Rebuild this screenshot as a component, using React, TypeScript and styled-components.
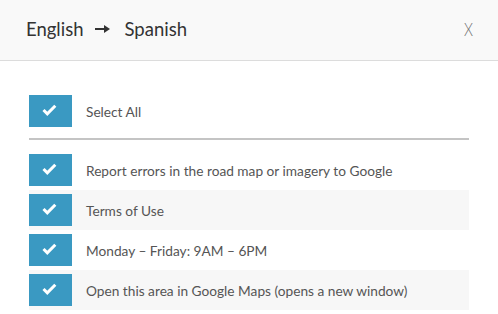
import React, { useState } from 'react';
import styled, { createGlobalStyle } from 'styled-components';

const GlobalStyle = createGlobalStyle`
  html, body {
    margin: 0;
    padding: 0;
    background: #ffffff;
  }
  body {
    font-family: Lato, "Open Sans", sans-serif;
  }
`;

const Dialog = styled.div`
  width: 498px;
  height: 314px;
  background-color: #ffffff;
  overflow: hidden;
`;

const Header = styled.div`
  display: flex;
  align-items: center;
  justify-content: space-between;
  height: 60px;
  padding: 0 24px 0 26px;
  background-color: #f9f9f9;
  border-bottom: 1px solid #dcdcdc;
`;

const Title = styled.div`
  display: flex;
  align-items: center;
  font-size: 18.5px;
  color: #333333;
  padding-bottom: 2px;

  svg {
    margin: 0 15px 0 11px;
  }
`;

const CloseButton = styled.button`
  border: none;
  background: none;
  padding: 0 0 2px 0;
  font-family: Lato, sans-serif;
  font-size: 18px;
  font-weight: 300;
  color: #707070;
  cursor: pointer;
  transform: scaleX(0.8);
`;

const Body = styled.div`
  padding: 30px 29px 0 29px;
`;

const Row = styled.label<{ striped?: boolean }>`
  display: flex;
  align-items: center;
  height: 40px;
  box-sizing: border-box;
  padding: 4px 0;
  background-color: ${({ striped }) => (striped ? '#f7f7f7' : 'transparent')};
  cursor: pointer;

  span {
    font-size: 13.7px;
    color: #555555;
    margin-left: 14px;
  }
`;

const CheckBox = styled.div<{ checked: boolean }>`
  width: 43px;
  height: 32px;
  display: flex;
  align-items: center;
  justify-content: center;
  background-color: ${({ checked }) => (checked ? '#3a99c2' : '#d8d8d8')};
  flex-shrink: 0;

  svg {
    margin: 0 2px 3px 0;
  }
`;

const Separator = styled.div`
  height: 2px;
  background-color: #c4c4c4;
  margin: 7px 0 10px 0;
`;

const Arrow = () => (
  <svg width='15' height='8' viewBox='0 0 15 8'>
    <rect x='0' y='3' width='10' height='2' fill='#333' />
    <polygon points='9,0 15,4 9,8' fill='#333' />
  </svg>
);

const Check = () => (
  <svg width='15' height='12' viewBox='0 0 15 12'>
    <polyline
      points='1.5,6 5.3,9.8 13.3,1.8'
      fill='none'
      stroke='#ffffff'
      strokeWidth='3'
    />
  </svg>
);

const items = [
  'Report errors in the road map or imagery to Google',
  'Terms of Use',
  'Monday \u2013 Friday: 9AM \u2013 6PM',
  'Open this area in Google Maps (opens a new window)',
];

const App: React.FC = () => {
  const [checked, setChecked] = useState<boolean[]>(items.map(() => true));
  const allChecked = checked.every(Boolean);

  const toggle = (index: number) =>
    setChecked((prev) => prev.map((c, i) => (i === index ? !c : c)));

  return (
    <>
      <GlobalStyle />
      <Dialog>
        <Header>
          <Title>
            English
            <Arrow />
            Spanish
          </Title>
          <CloseButton>X</CloseButton>
        </Header>
        <Body>
          <Row onClick={() => setChecked(items.map(() => !allChecked))}>
            <CheckBox checked={allChecked}>{allChecked && <Check />}</CheckBox>
            <span>Select All</span>
          </Row>
          <Separator />
          {items.map((item, i) => (
            <Row key={item} striped={i % 2 === 1} onClick={() => toggle(i)}>
              <CheckBox checked={checked[i]}>{checked[i] && <Check />}</CheckBox>
              <span>{item}</span>
            </Row>
          ))}
        </Body>
      </Dialog>
    </>
  );
};

export default App;
